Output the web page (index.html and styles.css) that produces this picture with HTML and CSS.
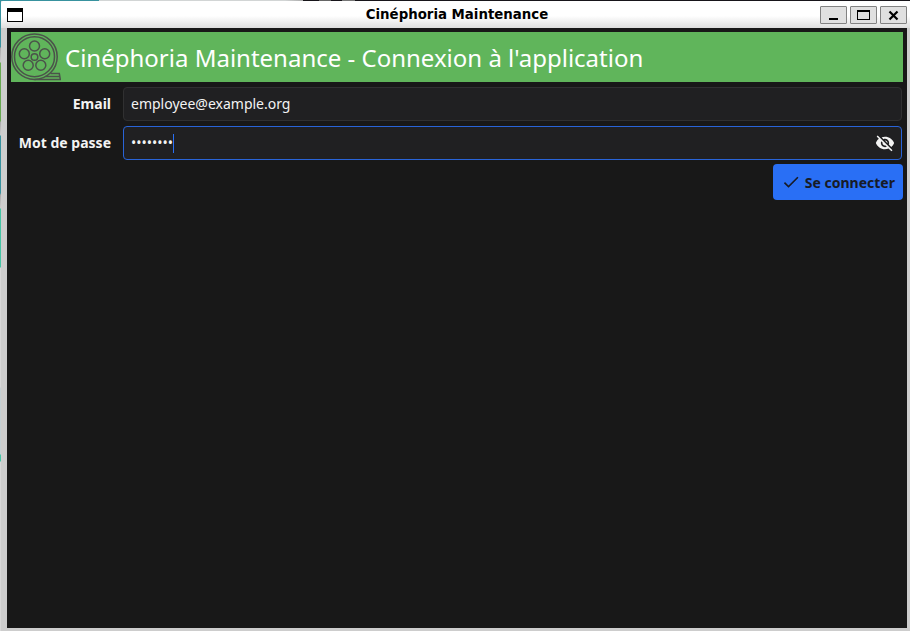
FILE: index.html
```
<!DOCTYPE html>
<html lang="fr">
<head>
<meta charset="utf-8">
<title>Cinéphoria Maintenance</title>
<link rel="stylesheet" href="styles.css">
</head>
<body>
<div class="window">
  <header class="titlebar">
    <svg class="menu" width="16" height="14" shape-rendering="crispEdges"><path d="M0 0h16v14H0z"/><path fill="#fff" d="M1 4h14v9H1z"/></svg>
    <div class="title">Cinéphoria Maintenance</div>
    <div class="controls">
      <span class="control"><svg width="25" height="16" shape-rendering="crispEdges"><path d="M8 11h9v2H8z"/></svg></span>
      <span class="control"><svg width="25" height="16" shape-rendering="crispEdges"><path fill-rule="evenodd" d="M6 3h13v10H6zM7 5v7h11V5z"/></svg></span>
      <span class="control"><svg width="25" height="16"><path d="M8.500 4.500l8 8M16.500 4.500l-8 8" stroke="#000" stroke-width="2.200"/></svg></span>
    </div>
  </header>
  <main class="app">
    <div class="banner">
      <svg class="reel" width="50" height="50" viewBox="0 0 50 50" fill="none" stroke="#4b534a" stroke-width="1.500">
        <circle cx="23.500" cy="24.700" r="22.700"/><circle cx="23.500" cy="24.700" r="20"/>
        <circle cx="23.500" cy="25" r="3.300"/>
        <circle cx="23.500" cy="14" r="5"/><circle cx="13.300" cy="21.700" r="5"/><circle cx="33.700" cy="21.700" r="5"/>
        <circle cx="17.200" cy="33.200" r="5"/><circle cx="29.800" cy="33.200" r="5"/>
        <path d="M23.500 47.400H49.300L48.300 41.500H39.500M34.500 44.500H48.500"/>
      </svg>
      <h1>Cinéphoria Maintenance - Connexion à l'application</h1>
    </div>
    <form class="form">
      <div class="row"><span class="label">Email</span><div class="field"><span class="value">employee@example.org</span></div></div>
      <div class="row"><span class="label">Mot de passe</span>
        <div class="field focused"><span class="value">••••••••</span><i class="caret"></i>
          <svg class="eye" width="20" height="20" viewBox="0 0 24 24" fill="#f3f3f3"><path d="M12 7c2.760 0 5 2.240 5 5 0 .65-.13 1.260-.36 1.830l2.920 2.920c1.510-1.260 2.700-2.890 3.430-4.750-1.730-4.390-6-7.500-11-7.500-1.400 0-2.740.25-3.980.7l2.160 2.160C10.740 7.130 11.350 7 12 7zM2 4.270l2.280 2.280.46.46C3.080 8.300 1.780 10.020 1 12c1.730 4.390 6 7.500 11 7.500 1.550 0 3.030-.3 4.380-.84l.42.42L19.730 22 21 20.730 3.270 3 2 4.270zM7.530 9.800l1.550 1.550c-.05.21-.08.43-.08.65 0 1.660 1.340 3 3 3 .22 0 .44-.03.65-.08l1.550 1.550c-.67.33-1.410.53-2.200.53-2.760 0-5-2.240-5-5 0-.79.2-1.530.53-2.200zm4.310-.78l3.150 3.150.02-.16c0-1.660-1.340-3-3-3l-.17.01z"/></svg>
        </div>
      </div>
      <button class="submit" type="button"><svg width="20" height="20" viewBox="0 0 24 24" fill="#171b26"><path d="M9 16.170L4.830 12l-1.420 1.410L9 19 21 7l-1.410-1.410z"/></svg>Se connecter</button>
    </form>
  </main>
</div>
</body>
</html>
```
FILE: styles.css
```
* { box-sizing: border-box; }
body {
  margin: 0;
  width: 910px;
  height: 631px;
  padding: 1px 0 0 1px;
  overflow: hidden;
  font-family: "Noto Sans", sans-serif;
  background:
    linear-gradient(90deg, #38929f 99px, #d2d5d5 99px 285px, #aaa 303px, #17151a 303px 319px, #666 319px 331px, #17151a 331px 342px, #777 342px 355px, #17151a 355px) 0 0 / 100% 1px no-repeat,
    linear-gradient(#38929f 47px, #aaa 48px, #ccc 62px, #69aa52 63px 121px, #aaa 122px, #ccc 135px, #38929f 136px 193px, #aaa 195px, #ccc 208px, #45c5a5 209px 267px, #d8d8d8 268px 387px, #c5d0d3 388px 454px, #45c5a5 455px 461px, #d8d8d8 462px) 0 0 / 1px 100% no-repeat,
    #ccc;
}
.window {
  width: 909px;
  height: 630px;
  background: #cdcdcd;
  border-top-left-radius: 2px;
  overflow: hidden;
}
.titlebar {
  height: 27px;
  display: flex;
  align-items: center;
  padding: 0 3px 0 6px;
  background: linear-gradient(#fff 55%, #dedede);
}
.menu { margin-top: 1px; }
.title {
  flex: 1;
  padding-left: 71px;
  text-align: center;
  font: bold 13.330px/26px "DejaVu Sans", sans-serif;
  color: #000;
}
.controls { display: flex; gap: 3px; }
.control {
  width: 27px;
  height: 18px;
  border: 1px solid #828282;
  border-radius: 1px;
  background: #e0e0e0;
}
.control svg { display: block; }
.app {
  width: 900px;
  height: 600px;
  margin-left: 6px;
  padding: 4px;
  background: #181818;
}
.banner {
  width: 892px;
  height: 50px;
  display: flex;
  align-items: center;
  gap: 4px;
  background: #60b55b;
}
.banner h1 {
  margin: 0;
  font-size: 24px;
  font-weight: 400;
  line-height: 50px;
  color: #fff;
  white-space: nowrap;
  padding-top: 2px;
}
.form {
  display: flex;
  flex-direction: column;
  gap: 5px;
  padding-top: 5px;
  color: #f3f3f3;
  font-size: 14px;
}
.row { display: flex; align-items: center; gap: 12px; padding-right: 1px; }
.label { width: 100px; padding-bottom: 2px; text-align: right; font-weight: 700; }
.field {
  flex: 1;
  height: 34px;
  display: flex;
  align-items: center;
  padding: 0 6px 0 7px;
  border: 1px solid #303031;
  border-radius: 4px;
  background: #202022;
}
.focused { border-color: #2964d8; }
.value { padding-bottom: 2px; }
.caret { width: 1px; height: 19px; background: #296ff5; }
.eye { margin-left: auto; }
.submit {
  align-self: flex-end;
  width: 130px;
  height: 36px;
  margin-top: -1px;
  padding: 0 8px;
  display: flex;
  align-items: center;
  justify-content: space-between;
  border: 0;
  border-radius: 4px;
  background: #296ff5;
  color: #171b26;
  font: bold 14px "Noto Sans", sans-serif;
}
```
